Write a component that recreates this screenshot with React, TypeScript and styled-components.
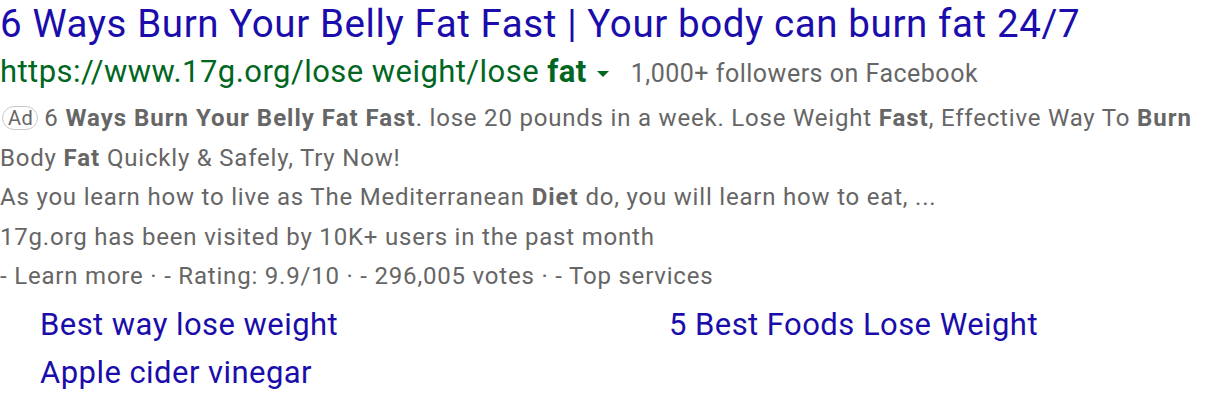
import React from "react";
import styled, { createGlobalStyle } from "styled-components";

const Global = createGlobalStyle`
  html, body { margin: 0; padding: 0; background: #fff; }
  body { font-family: Roboto, "Liberation Sans", Arial, sans-serif; }
`;

const Result = styled.div`
  padding: 0;
  width: 1216px;
  box-sizing: border-box;
`;

const Title = styled.a`
  display: block;
  color: #1a0dab;
  font-size: 38.5px;
  line-height: 48px;
  letter-spacing: 0.6px;
  text-decoration: none;
  white-space: nowrap;
`;

const UrlRow = styled.div`
  font-size: 31px;
  line-height: 47px;
  white-space: nowrap;
`;

const Url = styled.span`
  color: #006621;
  font-size: 31px;
  letter-spacing: 0.45px;
  b { font-weight: 700; }
`;

const Caret = styled.span`
  display: inline-block;
  width: 0;
  height: 0;
  margin: 0 22px 0 10px;
  vertical-align: 5px;
  border-left: 6px solid transparent;
  border-right: 6px solid transparent;
  border-top: 6px solid #006621;
`;

const Followers = styled.span`
  color: #666;
  font-size: 25px;
  letter-spacing: 0.5px;
`;

const Snippet = styled.div`
  color: #666;
  font-size: 24px;
  line-height: 39.5px;
  letter-spacing: 0.8px;
  margin-top: 2px;
  b { font-weight: 700; letter-spacing: 1px; }
`;

const Line = styled.div`
  white-space: nowrap;
`;

const AdBadge = styled.span`
  display: inline-block;
  box-sizing: border-box;
  border: 1px solid #c8c8c8;
  border-radius: 12px;
  font-size: 20px;
  line-height: 22px;
  letter-spacing: 0.5px;
  padding: 0 4px 0 5px;
  margin: 0 6px 0 2px;
  vertical-align: 1px;
  color: #666;
`;

const Sitelinks = styled.div`
  display: grid;
  grid-template-columns: 629px auto;
  padding-left: 40px;
  margin-top: 4.5px;
`;

const Sitelink = styled.a`
  color: #1a0dab;
  font-size: 31px;
  line-height: 48px;
  letter-spacing: 0.45px;
  text-decoration: none;
  white-space: nowrap;
`;

export default function App() {
  return (
    <>
      <Global />
      <Result>
        <Title href="#">6 Ways Burn Your Belly Fat Fast | Your body can burn fat 24/7</Title>
        <UrlRow>
          <Url>https://www.17g.org/lose weight/lose <b>fat</b></Url>
          <Caret />
          <Followers>1,000+ followers on Facebook</Followers>
        </UrlRow>
        <Snippet>
          <Line>
            <AdBadge>Ad</AdBadge>6 <b>Ways Burn Your Belly Fat Fast</b>. lose 20 pounds in a week. Lose Weight <b>Fast</b>, Effective Way To <b>Burn</b>
          </Line>
          <Line>Body <b>Fat</b> Quickly &amp; Safely, Try Now!</Line>
          <Line>As you learn how to live as The Mediterranean <b>Diet</b> do, you will learn how to eat, ...</Line>
          <Line>17g.org has been visited by 10K+ users in the past month</Line>
          <Line>- Learn more · - Rating: 9.9/10 · - 296,005 votes · - Top services</Line>
        </Snippet>
        <Sitelinks>
          <Sitelink href="#">Best way lose weight</Sitelink>
          <Sitelink href="#">5 Best Foods Lose Weight</Sitelink>
          <Sitelink href="#">Apple cider vinegar</Sitelink>
        </Sitelinks>
      </Result>
    </>
  );
}
